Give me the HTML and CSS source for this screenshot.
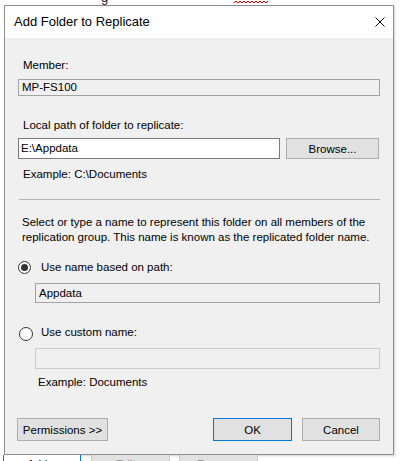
FILE: index.html
```html
<!DOCTYPE html>
<html>
<head>
<meta charset="utf-8">
<link rel="stylesheet" href="styles.css">
</head>
<body>
<div class="topstrip">
  <span class="frag">g</span>
  <svg class="squiggle" width="34" height="4" viewBox="0 0 34 4"><polyline points="0,3 2,1 4,3 6,1 8,3 10,1 12,3 14,1 16,3 18,1 20,3 22,1 24,3 26,1 28,3 30,1 32,3 34,1" fill="none" stroke="#e00000" stroke-width="1"/></svg>
</div>
<div class="dialog">
  <div class="titlebar">
    <span class="title">Add Folder to Replicate</span>
    <svg class="close" width="10" height="10" viewBox="0 0 10 10"><path d="M0.5 0.5 L9.5 9.5 M9.5 0.5 L0.5 9.5" stroke="#000" stroke-width="1" fill="none"/></svg>
  </div>
  <div class="content">
    <div class="label first">Member:</div>
    <div class="field readonly member">MP-FS100</div>
    <div class="label gap22">Local path of folder to replicate:</div>
    <div class="pathrow">
      <div class="field path">E:\Appdata</div>
      <div class="btn browse">Browse...</div>
    </div>
    <div class="label example">Example: C:\Documents</div>
    <div class="sep"></div>
    <p class="desc">Select or type a name to represent this folder on all members of the replication group. This name is known as the replicated folder name.</p>
    <div class="radio r1">
      <svg width="13" height="13" viewBox="0 0 13 13"><circle cx="6.5" cy="6.5" r="6" fill="#fff" stroke="#333" stroke-width="1"/><circle cx="6.5" cy="6.5" r="3.5" fill="#333"/></svg>
      <span>Use name based on path:</span>
    </div>
    <div class="field readonly indent appdata">Appdata</div>
    <div class="radio r2">
      <svg width="14" height="14" viewBox="0 0 14 14"><circle cx="7" cy="7" r="6.5" fill="#fff" stroke="#333" stroke-width="1"/></svg>
      <span>Use custom name:</span>
    </div>
    <div class="field disabled indent custom"></div>
    <div class="label example2">Example: Documents</div>
    <div class="buttons">
      <div class="btn perms">Permissions &gt;&gt;</div>
      <div class="spacer"></div>
      <div class="btn ok">OK</div>
      <div class="btn cancel">Cancel</div>
    </div>
  </div>
</div>
<div class="behind">
  <div class="bbtn selected">Add...</div>
  <div class="bbtn grey">Edit...</div>
  <div class="bbtn grey">Remove</div>
</div>
</body>
</html>
```
FILE: styles.css
```css
html, body {
  margin: 0;
  padding: 0;
  background: #ffffff;
  overflow: hidden;
}
body {
  width: 401px;
  height: 461px;
  font-family: "Liberation Sans", Arial, sans-serif;
  font-size: 11.5px;
  color: #000;
}
.topstrip {
  height: 5px;
  overflow: hidden;
  display: flex;
  align-items: flex-start;
}
.frag {
  font-size: 13px;
  line-height: 13px;
  margin-top: -9px;
  margin-left: 101px;
  color: #222;
}
.squiggle {
  margin-left: 126px;
  margin-top: 0;
}
.dialog {
  margin-left: 4px;
  width: 390px;
  height: 450px;
  box-sizing: border-box;
  border: 1px solid #8f8f8f;
  box-shadow: 1px 1px 2px rgba(0,0,0,0.18);
  background: #f0f0f0;
  display: flex;
  flex-direction: column;
}
.titlebar {
  height: 32px;
  background: #fff;
  display: flex;
  align-items: center;
  justify-content: space-between;
  padding: 0 8px 0 9px;
}
.title {
  font-size: 13px;
  line-height: 32px;
  color: #000;
}
.close {
  display: block;
}
.content {
  padding: 0 13px;
  display: flex;
  flex-direction: column;
}
.label {
  line-height: 14px;
  height: 14px;
  margin-left: 5px;
  white-space: nowrap;
}
.label.first { margin-top: 20px; }
.label.gap22 { margin-top: 22px; }
.label.example { margin-top: 8px; }
.label.example2 { margin-top: 6px; margin-left: 20px; }
.field {
  box-sizing: border-box;
  border: 1px solid #a3a3a3;
  line-height: 15px;
  padding-left: 3px;
  white-space: nowrap;
}
.readonly { background: #f0f0f0; }
.member { margin-top: 7px; height: 17px; }
.pathrow {
  margin-top: 6px;
  display: flex;
  height: 21px;
}
.field.path {
  width: 262px;
  height: 21px;
  background: #fff;
  border-color: #7a7a7a;
  line-height: 19px;
  padding-left: 2px;
}
.btn {
  box-sizing: border-box;
  background: #e1e1e1;
  border: 1px solid #adadad;
  display: flex;
  align-items: center;
  justify-content: center;
  white-space: nowrap;
}
.browse {
  margin-left: 6px;
  width: 93px;
  height: 21px;
}
.sep {
  margin-top: 18px;
  margin-left: 1px;
  height: 0;
  border-top: 1px solid #b4b4b4;
}
.desc {
  margin: 15px 0 0 4px;
  width: 364px;
  line-height: 15px;
}
.radio {
  display: flex;
  align-items: center;
  height: 15px;
  line-height: 15px;
}
.radio svg { display: block; flex: none; }
.radio.r1 { margin-top: 15px; }
.radio.r1 span { margin-left: 10px; }
.radio.r2 { margin-top: 22px; margin-left: 1px; }
.radio.r2 svg { margin-top: 3px; }
.radio.r2 span { margin-left: 8px; }
.indent { margin-left: 17px; }
.appdata { margin-top: 8px; height: 20px; line-height: 18px; }
.disabled {
  background: #f0f0f0;
  border-color: #cccccc;
}
.custom { margin-top: 8px; height: 21px; }
.buttons {
  margin-top: 29px;
  display: flex;
  height: 23px;
}
.spacer { flex: 1; }
.perms {
  margin-left: -1px;
  width: 91px;
  height: 23px;
}
.ok {
  width: 79px;
  height: 23px;
  border-color: #0078d7;
}
.cancel {
  margin-left: 10px;
  width: 78px;
  height: 23px;
}
.behind {
  display: flex;
  margin-left: 3px;
  height: 23px;
  gap: 10px;
}
.bbtn {
  box-sizing: border-box;
  width: 78px;
  height: 23px;
  text-align: center;
  line-height: 14px;
  padding-top: 2px;
}
.bbtn.selected {
  border: 1px solid #0078d7;
  border-top: none;
  background: #fff;
}
.bbtn.grey {
  width: 79px;
  background: #e1e1e1;
  border: 1px solid #c7c7c7;
  border-top: none;
  color: #8a8a8a;
}
.bbtn.grey + .bbtn.grey { margin-left: -1px; }
```
